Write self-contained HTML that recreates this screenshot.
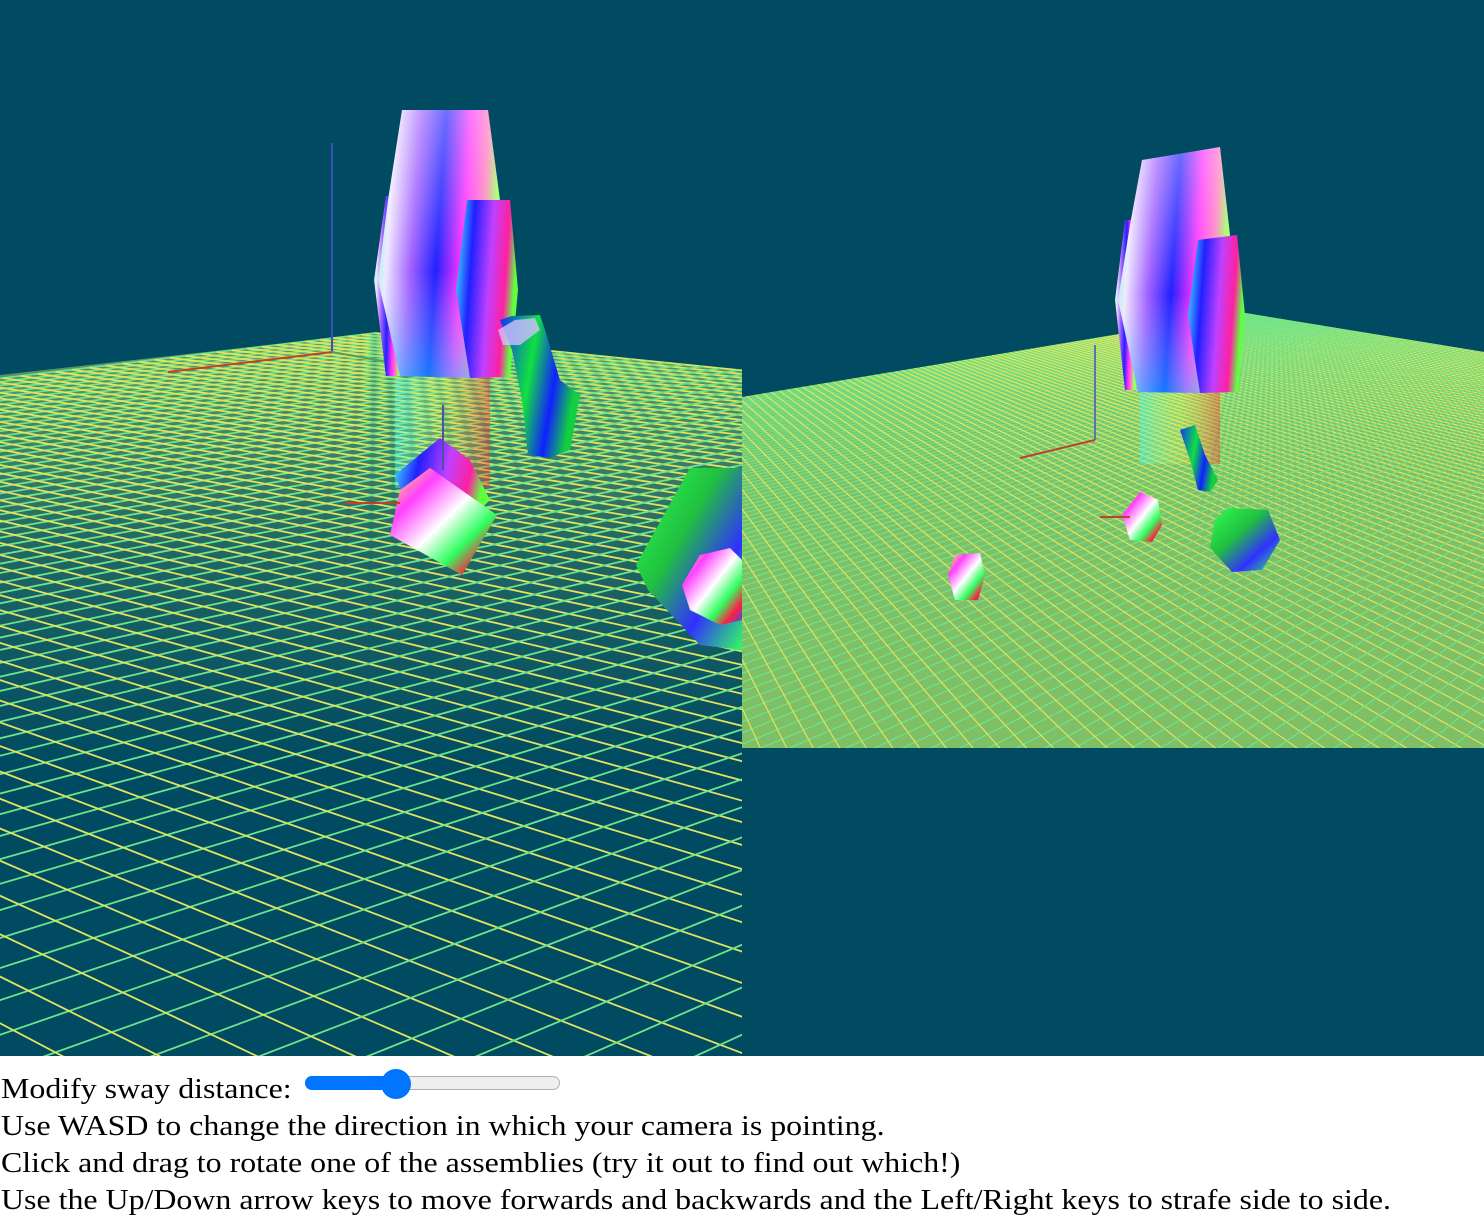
<!DOCTYPE html>
<html><head><meta charset="utf-8"><style>
html,body{margin:0;padding:0;background:#fff;width:1484px;height:1228px;overflow:hidden}
svg{display:block}
.t{font-family:"Liberation Serif",serif;font-size:29px;color:#000;line-height:37px;height:37px;position:absolute;left:1px;white-space:nowrap;transform:scaleX(1.1);transform-origin:0 0}
</style></head><body>
<svg id="s" width="1484" height="1056" viewBox="0 0 1484 1056" xmlns="http://www.w3.org/2000/svg">
<defs>
<linearGradient id="gA" x1="0" y1="0" x2="1" y2="0.15">
<stop offset="0" stop-color="#60ffd0"/><stop offset="0.15" stop-color="#f0e8ff"/><stop offset="0.35" stop-color="#a060ff"/><stop offset="0.55" stop-color="#2020ff"/><stop offset="0.75" stop-color="#ff30ff"/><stop offset="0.9" stop-color="#ff80c0"/><stop offset="1" stop-color="#a0ff60"/></linearGradient>
<linearGradient id="gA2" x1="0" y1="0" x2="0" y2="1">
<stop offset="0" stop-color="#fff" stop-opacity="0.35"/><stop offset="0.6" stop-color="#fff" stop-opacity="0"/><stop offset="1" stop-color="#00ffff" stop-opacity="0.4"/></linearGradient>
<linearGradient id="gB" x1="0" y1="0" x2="1" y2="0.2">
<stop offset="0" stop-color="#40ffff"/><stop offset="0.3" stop-color="#2020ff"/><stop offset="0.6" stop-color="#c040ff"/><stop offset="0.85" stop-color="#ff20a0"/><stop offset="1" stop-color="#60ff40"/></linearGradient>
<linearGradient id="gC" x1="0" y1="0" x2="1" y2="0.3">
<stop offset="0" stop-color="#1030ff"/><stop offset="0.45" stop-color="#10e040"/><stop offset="0.75" stop-color="#1020ff"/><stop offset="1" stop-color="#10d040"/></linearGradient>
<linearGradient id="gD" x1="0" y1="0" x2="1" y2="1">
<stop offset="0" stop-color="#ffff40"/><stop offset="0.25" stop-color="#ff40ff"/><stop offset="0.5" stop-color="#ffffff"/><stop offset="0.7" stop-color="#30ff60"/><stop offset="0.85" stop-color="#ff2040"/><stop offset="1" stop-color="#3050ff"/></linearGradient>
<linearGradient id="gE" x1="0" y1="0" x2="1" y2="1">
<stop offset="0" stop-color="#30ff50"/><stop offset="0.4" stop-color="#20c040"/><stop offset="0.7" stop-color="#3030ff"/><stop offset="1" stop-color="#30ff60"/></linearGradient>
<linearGradient id="gR" x1="0" y1="0" x2="1" y2="0">
<stop offset="0" stop-color="#40ffff" stop-opacity="0.6"/><stop offset="0.5" stop-color="#ffff60" stop-opacity="0.3"/><stop offset="1" stop-color="#ff3030" stop-opacity="0.6"/></linearGradient>
<linearGradient id="fade" x1="0" y1="0" x2="0" y2="1">
<stop offset="0" stop-color="#9ed86c" stop-opacity="0.6"/><stop offset="0.3" stop-color="#9ed86c" stop-opacity="0.2"/><stop offset="0.6" stop-color="#9ed86c" stop-opacity="0"/></linearGradient>
<clipPath id="cl"><rect x="0" y="0" width="742" height="1056"/></clipPath>
<clipPath id="cr"><polygon points="742,397 1245,313 1484,352 1484,748 742,748"/></clipPath>
</defs>
<rect width="1484" height="1056" fill="#004a62"/>
<g clip-path="url(#cl)">
<polygon points="0,375 375,333 742,370 742,1056 0,1056" fill="url(#fade)"/>
<g id="lgrid"></g>
</g>
<g clip-path="url(#cr)">
<rect x="742" y="300" width="742" height="450" fill="#7fbf66"/>
<g id="rgrid"></g>
</g>
<line x1="332" y1="143" x2="332" y2="352" stroke="#4050b0" stroke-width="2"/>
<line x1="168" y1="372" x2="332" y2="352" stroke="#c04030" stroke-width="2"/>
<line x1="332" y1="352" x2="460" y2="375" stroke="#50a060" stroke-width="2"/>
<rect x="395" y="378" width="95" height="110" fill="url(#gR)" opacity="0.7"/>
<polygon points="386,196 402,196 402,376 386,376 374,280" fill="url(#gA)"/>
<polygon points="402,110 488,110 500,200 500,377 470,378 400,376 378,280 388,200" fill="url(#gA)"/>
<polygon points="402,110 488,110 500,200 500,377 470,378 400,376 378,280 388,200" fill="url(#gA2)"/>
<polygon points="467,200 510,200 518,290 510,377 470,378 456,290" fill="url(#gB)"/>
<polygon points="500,320 512,316 540,315 545,330 560,380 580,395 570,450 550,458 528,455 522,400 512,350" fill="url(#gC)"/>
<polygon points="498,330 515,320 535,318 540,330 520,345 503,345" fill="#d0c0ff" opacity="0.8"/>
<polygon points="440,438 470,460 490,500 470,520 410,515 395,475" fill="url(#gB)"/>
<polygon points="430,468 497,515 462,575 390,535 400,490" fill="url(#gD)"/>
<line x1="443" y1="405" x2="443" y2="470" stroke="#5050a0" stroke-width="2"/>
<line x1="345" y1="503" x2="400" y2="503" stroke="#c04030" stroke-width="2"/>
<polygon points="690,468 742,468 742,650 700,645 648,590 636,565" fill="url(#gE)"/>
<polygon points="700,555 730,548 742,560 742,620 720,625 690,610 682,585" fill="url(#gD)"/>
<line x1="1095" y1="345" x2="1095" y2="440" stroke="#6070b0" stroke-width="2"/>
<line x1="1020" y1="458" x2="1095" y2="440" stroke="#c04030" stroke-width="2"/>
<rect x="1140" y="392" width="80" height="72" fill="url(#gR)" opacity="0.7"/>
<polygon points="1125,220 1136,220 1136,390 1125,390 1115,300" fill="url(#gA)"/>
<polygon points="1142,160 1220,147 1230,235 1230,392 1200,393 1138,392 1118,300 1130,225" fill="url(#gA)"/>
<polygon points="1142,160 1220,147 1230,235 1230,392 1200,393 1138,392 1118,300 1130,225" fill="url(#gA2)"/>
<polygon points="1198,240 1237,235 1245,315 1238,392 1200,393 1188,315" fill="url(#gB)"/>
<polygon points="1180,430 1195,425 1205,455 1218,480 1210,492 1198,490 1190,460" fill="url(#gC)"/>
<polygon points="1140,492 1158,500 1162,525 1152,542 1130,540 1122,515" fill="url(#gD)"/>
<polygon points="1228,508 1268,510 1280,540 1262,570 1232,572 1210,548 1215,520" fill="url(#gE)"/>
<polygon points="955,555 980,553 985,575 978,600 955,600 948,575" fill="url(#gD)"/>
<line x1="1100" y1="517" x2="1130" y2="517" stroke="#c04030" stroke-width="2"/>
</svg>
<div class="t" style="top:1071px">Modify sway distance:</div>
<div style="position:absolute;left:305px;top:1076px;width:255px;height:14px;border-radius:7px;background:#efefef;border:1px solid #b0b0b0;box-sizing:border-box"></div>
<div style="position:absolute;left:305px;top:1076px;width:92px;height:14px;border-radius:7px;background:#0075ff"></div>
<div style="position:absolute;left:381px;top:1069px;width:30px;height:30px;border-radius:50%;background:#0075ff"></div>
<div class="t" style="top:1108px">Use WASD to change the direction in which your camera is pointing.</div>
<div class="t" style="top:1145px">Click and drag to rotate one of the assemblies (try it out to find out which!)</div>
<div class="t" style="top:1182px">Use the Up/Down arrow keys to move forwards and backwards and the Left/Right keys to strafe side to side.</div>
<script>
function H(x0,y0,x1,y1,x2,y2,x3,y3){
var dx1=x1-x2,dx2=x3-x2,dx3=x0-x1+x2-x3,dy1=y1-y2,dy2=y3-y2,dy3=y0-y1+y2-y3;
var den=dx1*dy2-dx2*dy1,g=(dx3*dy2-dx2*dy3)/den,h=(dx1*dy3-dx3*dy1)/den;
var a=x1-x0+g*x1,b=x3-x0+h*x3,c=x0,d=y1-y0+g*y1,e=y3-y0+h*y3,f=y0;
return function(u,v){var w=g*u+h*v+1;return[(a*u+b*v+c)/w,(d*u+e*v+f)/w];};}
function grid(id,P,n,sw){
var s='';var el=document.getElementById(id);
for(var i=0;i<=n;i++){var t=i/n;
var p=P(t,0),q=P(t,1);s+='<line x1="'+p[0].toFixed(1)+'" y1="'+p[1].toFixed(1)+'" x2="'+q[0].toFixed(1)+'" y2="'+q[1].toFixed(1)+'" stroke="#e2e45e" stroke-width="'+sw+'"/>';
p=P(0,t);q=P(1,t);s+='<line x1="'+p[0].toFixed(1)+'" y1="'+p[1].toFixed(1)+'" x2="'+q[0].toFixed(1)+'" y2="'+q[1].toFixed(1)+'" stroke="#6ee48a" stroke-width="'+sw+'"/>';}
el.innerHTML=s;}
grid('lgrid',H(375,333,-1500,560,300,4200,2600,560),80,1.8);
grid('rgrid',H(1245,313,600,420,1000,1400,1900,420),110,1.2);
</script>
</body></html>
